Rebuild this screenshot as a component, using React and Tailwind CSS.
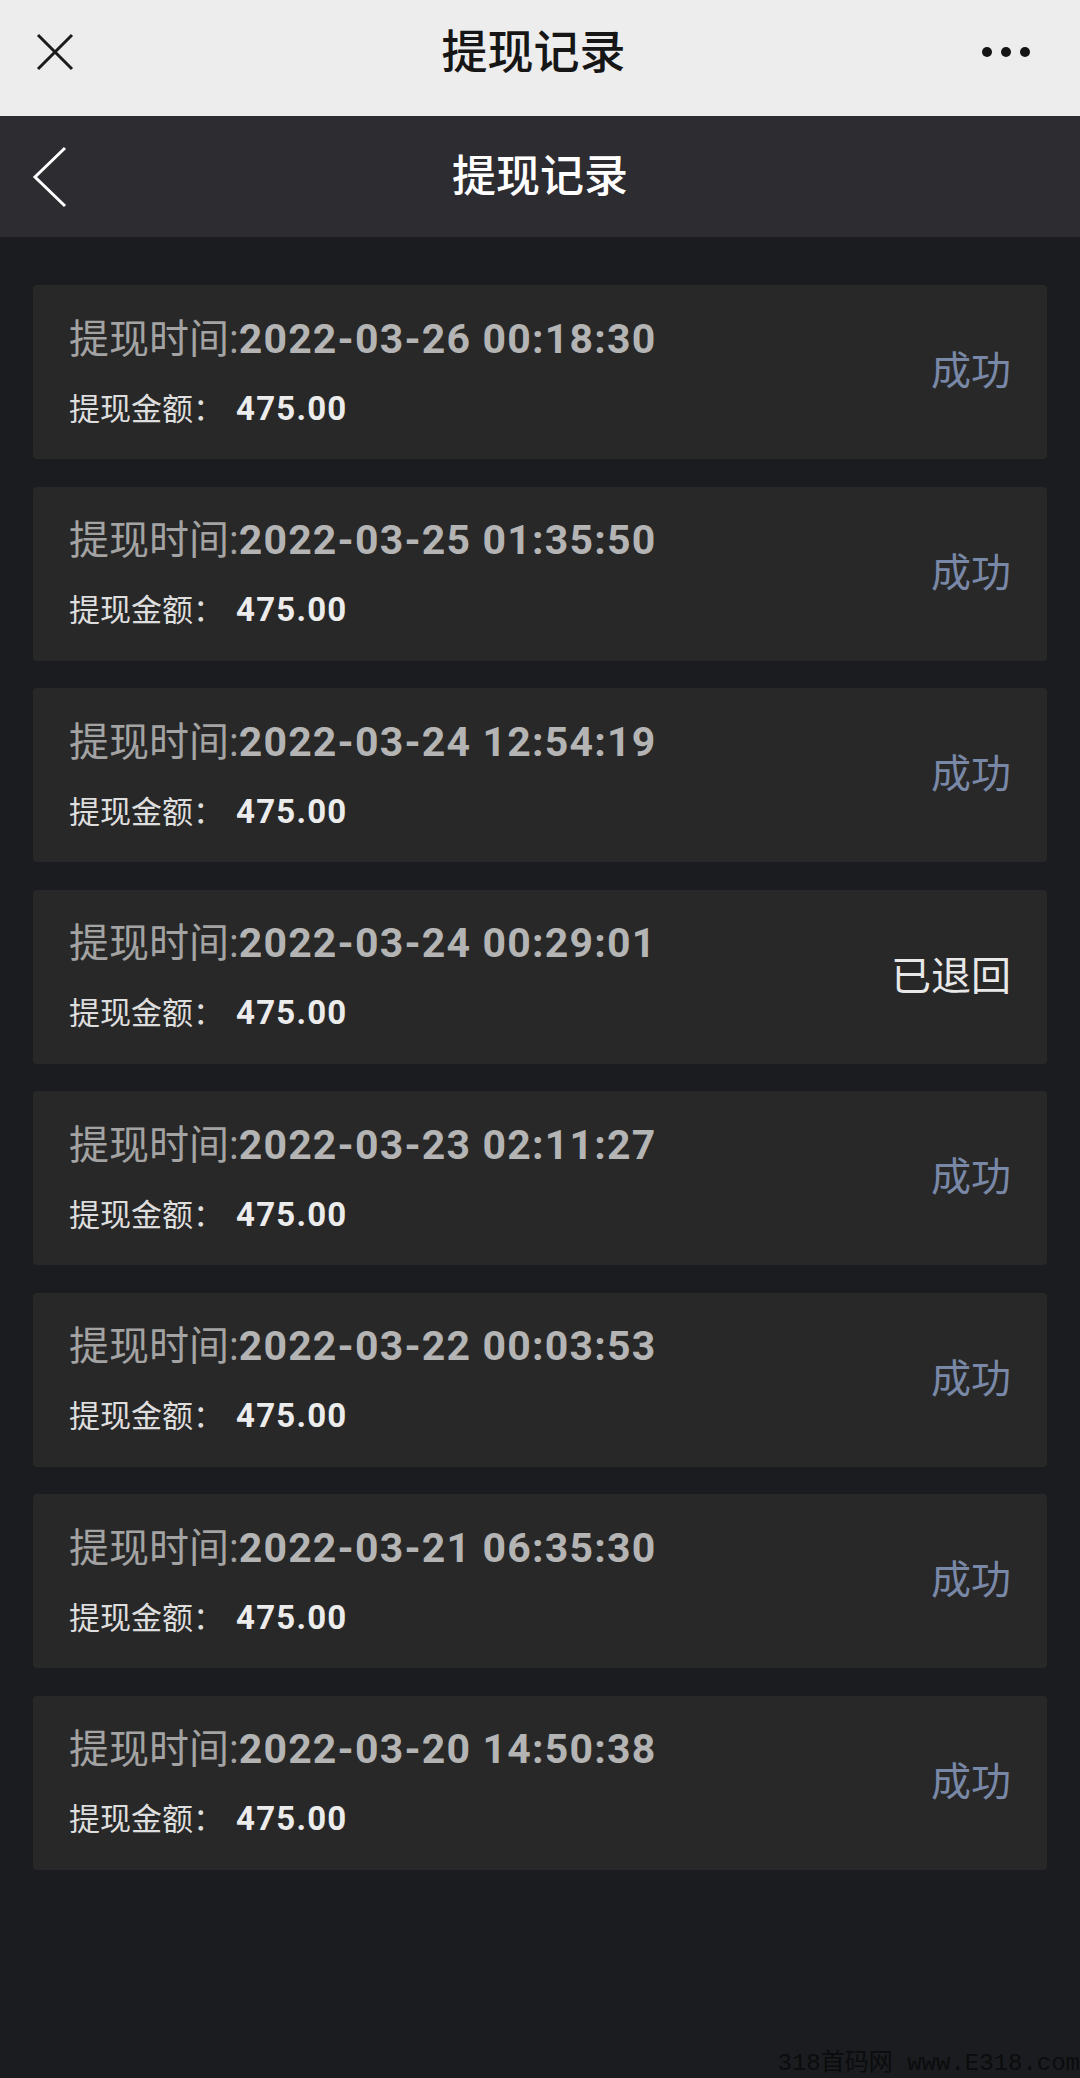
import React from "react";

const records = [
  { time: "2022-03-26 00:18:30", amount: "475.00", status: "成功" },
  { time: "2022-03-25 01:35:50", amount: "475.00", status: "成功" },
  { time: "2022-03-24 12:54:19", amount: "475.00", status: "成功" },
  { time: "2022-03-24 00:29:01", amount: "475.00", status: "已退回" },
  { time: "2022-03-23 02:11:27", amount: "475.00", status: "成功" },
  { time: "2022-03-22 00:03:53", amount: "475.00", status: "成功" },
  { time: "2022-03-21 06:35:30", amount: "475.00", status: "成功" },
  { time: "2022-03-20 14:50:38", amount: "475.00", status: "成功" },
];

function RecordCard({ record }) {
  const ok = record.status === "成功";

  return (
    <div className="flex items-center justify-between h-[174px] px-[36px] bg-[#282828] rounded-[4px]">
      <div className="flex flex-col gap-[25px]">
        <div className="text-[40px] leading-[48px] text-[#a3a3a3] whitespace-nowrap">
          提现时间:<span className="text-[41px] font-bold tracking-[1.2px] text-[#b4b4b4]">{record.time}</span>
        </div>
        <div className="text-[31px] leading-[40px] text-[#dedede] whitespace-nowrap">
          提现金额：<span className="ml-[12px] text-[33px] font-bold tracking-[1.2px] text-[#ececec]">{record.amount}</span>
        </div>
      </div>
      <span
        className={
          ok
            ? "text-[40px] text-[#7a88a8]"
            : "text-[40px] text-[#e8e8e8]"
        }
      >
        {record.status}
      </span>
    </div>
  );
}

export default function App() {
  return (
    <div
      className="relative w-[1080px] h-[2078px] overflow-hidden bg-[#1a1c1f]"
      style={{ fontFamily: 'Roboto, "Noto Sans CJK SC", sans-serif' }}
    >
      {/* wechat top bar */}
      <div className="flex items-center justify-between h-[116px] px-[36px] bg-[#ededed]">
        <svg width="38" height="38" viewBox="0 0 38 38" className="mt-[-12px]">
          <path d="M2 2 L36 36 M36 2 L2 36" stroke="#1b1b1b" strokeWidth="3" />
        </svg>
        <span className="mt-[-12px] ml-[11px] text-[46px] font-medium text-[#161616]">提现记录</span>
        <div className="flex gap-[9px] mt-[-12px] mr-[14px]">
          <span className="w-[10px] h-[10px] rounded-full bg-[#151515]" />
          <span className="w-[10px] h-[10px] rounded-full bg-[#151515]" />
          <span className="w-[10px] h-[10px] rounded-full bg-[#151515]" />
        </div>
      </div>

      {/* page header */}
      <div className="relative flex items-center justify-center h-[121px] bg-[#2c2c31]">
        <svg width="40" height="64" viewBox="0 0 40 64" className="absolute left-[30px] top-[29px]">
          <path d="M35 3 L5 32 L35 61" fill="none" stroke="#ffffff" strokeWidth="3" />
        </svg>
        <span className="text-[44px] font-medium text-white">提现记录</span>
      </div>

      <div className="flex flex-col gap-[27.5px] px-[33px] pt-[48px]">
        {records.map((r) => (
          <RecordCard key={r.time} record={r} />
        ))}
      </div>

      <div
        className="absolute right-0 bottom-0 text-[24px] leading-[28px] text-[#0b0c0d] whitespace-nowrap"
        style={{ fontFamily: '"Liberation Mono", "Noto Sans CJK SC", monospace' }}
      >
        318首码网 www.E318.com
      </div>
    </div>
  );
}
